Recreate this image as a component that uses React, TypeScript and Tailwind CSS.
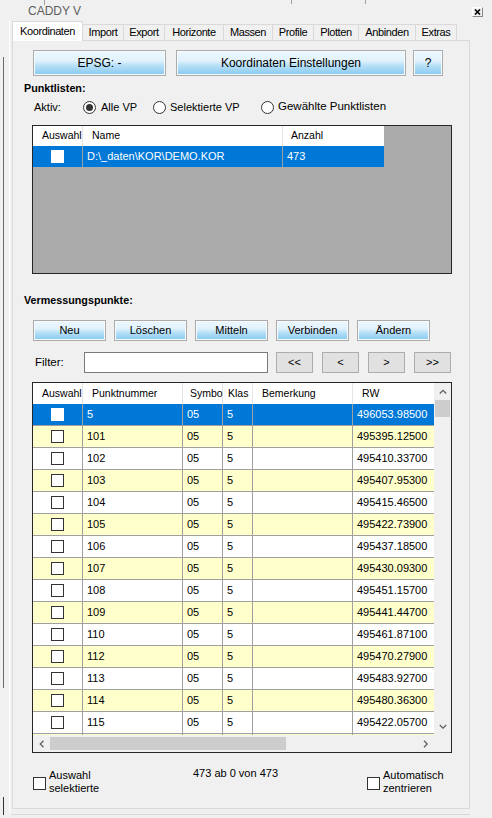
import React from "react";

const data: [string, string][] = [
  ["5", "496053.98500"],
  ["101", "495395.12500"],
  ["102", "495410.33700"],
  ["103", "495407.95300"],
  ["104", "495415.46500"],
  ["105", "495422.73900"],
  ["106", "495437.18500"],
  ["107", "495430.09300"],
  ["108", "495451.15700"],
  ["109", "495441.44700"],
  ["110", "495461.87100"],
  ["112", "495470.27900"],
  ["113", "495483.92700"],
  ["114", "495480.36300"],
  ["115", "495422.05700"],
];

const tabs: [string, string][] = [
  ["Import", "w-[41px]"],
  ["Export", "w-[41px]"],
  ["Horizonte", "w-[59px]"],
  ["Massen", "w-[49px]"],
  ["Profile", "w-[41px]"],
  ["Plotten", "w-[45px]"],
  ["Anbinden", "w-[57px]"],
  ["Extras", "w-[41px]"],
];

const blue =
  "bg-[linear-gradient(to_bottom,#edf7fd_0%,#e1f2fc_40%,#b5dff7_62%,#88c9f0_100%)] border border-[#acacac] shadow-[inset_0_0_0_1px_#f5fafe] flex items-center justify-center text-black shrink-0";

const navBtn =
  "w-[37px] h-[21px] bg-[#e1e1e1] border border-[#adadad] flex items-center justify-center text-[11px] shrink-0";

function Check({ selected }: { selected?: boolean }) {
  return (
    <div
      className={
        selected
          ? "w-[13px] h-[13px] bg-white border border-white shrink-0"
          : "w-[13px] h-[13px] bg-white border border-[#333333] shrink-0"
      }
    />
  );
}

function Radio({ checked }: { checked?: boolean }) {
  return (
    <div className="w-[13px] h-[13px] rounded-full border border-[#333333] bg-white flex items-center justify-center shrink-0">
      {checked ? <div className="w-[7px] h-[7px] rounded-full bg-[#333333]" /> : null}
    </div>
  );
}

function Chevron({ dir }: { dir: "up" | "down" | "left" | "right" }) {
  const d =
    dir === "up"
      ? "M0.8 4.5 L4 1.3 L7.2 4.5"
      : dir === "down"
      ? "M0.8 1 L4 4.2 L7.2 1"
      : dir === "left"
      ? "M4.5 0.8 L1.3 4 L4.5 7.2"
      : "M1 0.8 L4.2 4 L1 7.2";
  const horiz = dir === "up" || dir === "down";
  return (
    <svg width={horiz ? 8 : 6} height={horiz ? 6 : 8} viewBox={horiz ? "0 0 8 6" : "0 0 6 8"}>
      <path d={d} stroke="#606060" strokeWidth="1.3" fill="none" />
    </svg>
  );
}

export default function App() {
  return (
    <div className="w-[492px] h-[818px] bg-[#f0f0f0] flex flex-col overflow-hidden font-['Liberation_Sans',Arial,sans-serif] text-black">
      {/* title bar */}
      <div className="relative h-[21px] flex items-center shrink-0">
        <div className="absolute left-[44px] top-0 w-px h-[5px] bg-[#a0a0a0]" />
        <div className="absolute left-[291px] top-0 w-px h-[4px] bg-[#a0a0a0]" />
        <div className="absolute left-[365px] top-0 w-px h-[4px] bg-[#a0a0a0]" />
        <span className="pl-[28px] text-[12px] text-[#5f5f5f] leading-none">CADDY V</span>
        <div className="ml-auto mr-[9px] mt-[3px] w-[11px] h-[10px] border border-t-white border-l-white border-r-[#888888] border-b-[#888888] flex items-center justify-center bg-[#f0f0f0]">
          <svg width="7" height="6" viewBox="0 0 7 6">
            <path d="M1 0.5 L6 5.5 M6 0.5 L1 5.5" stroke="#000" strokeWidth="1.6" />
          </svg>
        </div>
      </div>

      <div className="flex flex-1">
        {/* left strip */}
        <div className="w-[12px] flex shrink-0">
          <div className="w-px ml-[3px] flex flex-col">
            <div className="h-[36px]" />
            <div className="h-[631px] bg-[#6a6a6a]" />
            <div className="flex-1" />
            <div className="h-[18px] bg-[#333333]" />
            <div className="h-[3px]" />
          </div>
          <div className="w-px ml-[5px] h-[791px] bg-white" />
        </div>

        {/* main column */}
        <div className="w-[458px] flex flex-col shrink-0">
          {/* tabs */}
          <div className="h-[19px] flex items-end shrink-0">
            <div className="relative z-10 -mb-px w-[71px] h-[20px] bg-white border-t border-l border-r border-[#d9d9d9] flex items-center justify-center text-[11px] tracking-[-0.4px] shrink-0">
              Koordinaten
            </div>
            {tabs.map(([t, w]) => (
              <div
                key={t}
                className={`${w} h-[16px] border-t border-r border-[#d9d9d9] bg-[#f0f0f0] flex items-center justify-center text-[11px] tracking-[-0.4px] shrink-0`}
              >
                {t}
              </div>
            ))}
          </div>

          {/* panel */}
          <div className="w-[458px] h-[769px] border border-[#d9d9d9] bg-[#f0f0f0] flex flex-col shrink-0">
            <div className="mt-[9px] ml-[20px] flex items-center">
              <div className={`w-[133px] h-[26px] text-[12px] ${blue}`}>EPSG: -</div>
              <div className={`ml-[10px] w-[230px] h-[26px] text-[12px] ${blue}`}>Koordinaten Einstellungen</div>
              <div className={`ml-[7px] w-[30px] h-[26px] text-[12px] ${blue}`}>?</div>
            </div>

            <div className="mt-[6px] ml-[11px] h-[13px] leading-[13px] text-[10.75px] font-bold">Punktlisten:</div>

            <div className="mt-[4px] ml-[21px] h-[16px] flex items-center text-[11px]">
              <div className="w-[49px]">Aktiv:</div>
              <div className="w-[70px] flex items-center gap-[5px]">
                <Radio checked />
                <span>Alle VP</span>
              </div>
              <div className="w-[108px] flex items-center gap-[4px]">
                <Radio />
                <span>Selektierte VP</span>
              </div>
              <div className="flex items-center gap-[4px]">
                <Radio />
                <span className="text-[11.5px]">Gewählte Punktlisten</span>
              </div>
            </div>

            {/* Punktlisten grid */}
            <div className="ml-[19px] mt-[10px] w-[420px] h-[149px] border border-[#262626] bg-[#ababab] flex flex-col shrink-0">
              <div className="flex h-[20px] bg-white w-[351px] text-[10.5px]">
                <div className="w-[50px] border-r border-[#e5e5e5] pl-[9px] flex items-center whitespace-nowrap">Auswahl</div>
                <div className="w-[200px] border-r border-[#e5e5e5] pl-[9px] flex items-center">Name</div>
                <div className="w-[101px] pl-[8px] flex items-center">Anzahl</div>
              </div>
              <div className="flex h-[21px] bg-[#0078d7] text-white w-[351px] text-[11px]">
                <div className="w-[50px] border-r border-[#a0a0a0] flex items-center justify-center">
                  <Check selected />
                </div>
                <div className="w-[200px] border-r border-[#a0a0a0] pl-[4px] flex items-center">D:\_daten\KOR\DEMO.KOR</div>
                <div className="w-[101px] pl-[4px] flex items-center">473</div>
              </div>
            </div>

            <div className="mt-[20px] ml-[11px] h-[13px] leading-[13px] text-[10.75px] font-bold">Vermessungspunkte:</div>

            <div className="mt-[13px] ml-[20px] flex gap-[8px]">
              <div className={`w-[73px] h-[21px] text-[11px] ${blue}`}>Neu</div>
              <div className={`w-[73px] h-[21px] text-[11px] ${blue}`}>Löschen</div>
              <div className={`w-[73px] h-[21px] text-[11px] ${blue}`}>Mitteln</div>
              <div className={`w-[73px] h-[21px] text-[11px] ${blue}`}>Verbinden</div>
              <div className={`w-[73px] h-[21px] text-[11px] ${blue}`}>Ändern</div>
            </div>

            <div className="mt-[11px] ml-[22px] h-[21px] flex items-center">
              <div className="w-[49px] text-[11.5px]">Filter:</div>
              <div className="w-[184px] h-[21px] bg-white border border-[#7a7a7a] shrink-0" />
              <div className="ml-[8px] flex gap-[9px]">
                <div className={navBtn}>&lt;&lt;</div>
                <div className={navBtn}>&lt;</div>
                <div className={navBtn}>&gt;</div>
                <div className={navBtn}>&gt;&gt;</div>
              </div>
            </div>

            {/* main grid */}
            <div className="ml-[19px] mt-[9px] w-[420px] h-[371px] border border-[#262626] bg-white flex flex-col shrink-0">
              <div className="flex h-[352px]">
                <div className="w-[401px] flex flex-col">
                  <div className="flex h-[21px] bg-white text-[10.5px] shrink-0">
                    <div className="w-[50px] border-r border-[#e5e5e5] pl-[9px] flex items-center whitespace-nowrap">Auswahl</div>
                    <div className="w-[100px] border-r border-[#e5e5e5] pl-[9px] flex items-center whitespace-nowrap">Punktnummer</div>
                    <div className="w-[40px] border-r border-[#e5e5e5] pl-[7px] flex items-center whitespace-nowrap">Symbo</div>
                    <div className="w-[30px] border-r border-[#e5e5e5] pl-[5px] flex items-center whitespace-nowrap">Klas</div>
                    <div className="w-[100px] border-r border-[#e5e5e5] pl-[9px] flex items-center whitespace-nowrap">Bemerkung</div>
                    <div className="w-[81px] pl-[9px] flex items-center whitespace-nowrap">RW</div>
                  </div>
                  <div className="h-[331px] overflow-hidden text-[11px]">
                    {data.map(([nr, rw], i) => {
                      const sel = i === 0;
                      const rowCls = sel
                        ? "flex h-[22px] border-b border-[#a0a0a0] bg-[#0078d7] text-white"
                        : i % 2 === 1
                        ? "flex h-[22px] border-b border-[#a0a0a0] bg-[#ffffcc]"
                        : "flex h-[22px] border-b border-[#a0a0a0] bg-white";
                      return (
                        <div key={nr} className={rowCls}>
                          <div className="w-[50px] border-r border-[#a0a0a0] flex items-center justify-center">
                            <Check selected={sel} />
                          </div>
                          <div className="w-[100px] border-r border-[#a0a0a0] pl-[4px] flex items-center">{nr}</div>
                          <div className="w-[40px] border-r border-[#a0a0a0] pl-[4px] flex items-center">05</div>
                          <div className="w-[30px] border-r border-[#a0a0a0] pl-[4px] flex items-center">5</div>
                          <div className="w-[100px] border-r border-[#a0a0a0]" />
                          <div className="w-[81px] pl-[4px] flex items-center">{rw}</div>
                        </div>
                      );
                    })}
                    <div className="flex h-[22px] bg-[#ffffcc]">
                      <div className="w-[50px] border-r border-[#a0a0a0]" />
                      <div className="w-[100px] border-r border-[#a0a0a0]" />
                      <div className="w-[40px] border-r border-[#a0a0a0]" />
                      <div className="w-[30px] border-r border-[#a0a0a0]" />
                      <div className="w-[100px] border-r border-[#a0a0a0]" />
                      <div className="w-[81px]" />
                    </div>
                  </div>
                </div>
                {/* vertical scrollbar */}
                <div className="w-[17px] bg-[#f0f0f0] flex flex-col shrink-0">
                  <div className="h-[17px] flex items-center justify-center">
                    <Chevron dir="up" />
                  </div>
                  <div className="h-[17px] mx-px bg-[#cdcdcd]" />
                  <div className="flex-1" />
                  <div className="h-[17px] flex items-center justify-center">
                    <Chevron dir="down" />
                  </div>
                </div>
              </div>
              {/* horizontal scrollbar */}
              <div className="flex h-[17px] shrink-0">
                <div className="w-[401px] bg-[#f0f0f0] flex items-center">
                  <div className="w-[17px] h-[17px] flex items-center justify-center">
                    <Chevron dir="left" />
                  </div>
                  <div className="w-[236px] h-[13px] bg-[#cdcdcd]" />
                  <div className="flex-1" />
                  <div className="w-[17px] h-[17px] flex items-center justify-center">
                    <Chevron dir="right" />
                  </div>
                </div>
                <div className="w-[17px] bg-[#f0f0f0]" />
              </div>
            </div>

            {/* bottom */}
            <div className="mt-[16px] ml-[20px] flex items-start text-[11px]">
              <div className="w-[160px] flex items-start">
                <div className="mt-[8px]">
                  <Check />
                </div>
                <div className="ml-[3px] leading-[13px]">
                  Auswahl
                  <br />
                  selektierte
                </div>
              </div>
              <div className="w-[174px] leading-[13px] -mt-[2px]">473 ab 0 von 473</div>
              <div className="flex items-start">
                <div className="mt-[8px]">
                  <Check />
                </div>
                <div className="ml-[3px] leading-[13px]">
                  Automatisch
                  <br />
                  zentrieren
                </div>
              </div>
            </div>
          </div>
          <div className="mt-[5px] h-px bg-[#d8d8d8]" />
        </div>
        <div className="flex-1" />
      </div>
    </div>
  );
}
